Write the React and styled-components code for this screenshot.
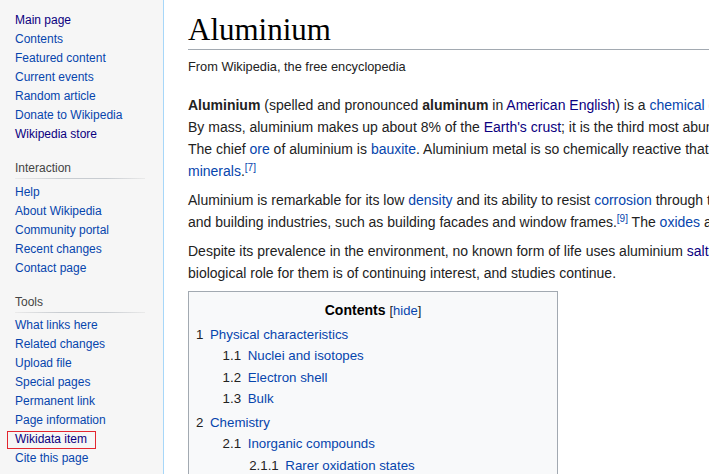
import React from "react";
import styled, { createGlobalStyle } from "styled-components";

const GlobalStyle = createGlobalStyle`
  html, body {
    margin: 0;
    padding: 0;
    background: #f6f6f6;
  }
  body {
    font-family: "Liberation Sans", Arial, sans-serif;
    color: #222;
  }
`;

const Page = styled.div`
  display: flex;
  width: 100vw;
  height: 100vh;
  overflow: hidden;
  background: #f6f6f6;
`;

const Sidebar = styled.nav`
  flex: 0 0 163px;
  padding-top: 11px;
  font-size: 12px;
`;

const Portal = styled.div`
  margin-bottom: 15px;
`;

const PortalHeading = styled.h3`
  margin: 0 0 0 15px;
  width: 130px;
  font-size: 12px;
  font-weight: normal;
  line-height: 19px;
  color: #444;
  padding-bottom: 1px;
  &::after {
    content: "";
    display: block;
    height: 1px;
    background: linear-gradient(to right, #eaeaea 0%, #c8ccd1 35%, #c8ccd1 70%, #eaeaea 100%);
  }
`;

const LinkList = styled.ul`
  list-style: none;
  margin: ${(p) => (p.$first ? "0" : "2.5px")} 0 0 0;
  padding: 0 0 0 15px;
`;

const LinkItem = styled.li`
  position: relative;
  line-height: 19px;
  white-space: nowrap;
`;

const Link = styled.a`
  color: ${(p) => (p.$visited ? "#0b0080" : "#0645ad")};
  text-decoration: none;
`;

const Highlight = styled.span`
  position: absolute;
  left: -8px;
  top: 1px;
  width: 89px;
  height: 18px;
  box-sizing: border-box;
  border: 1px solid #e3262f;
  pointer-events: none;
`;

const Content = styled.main`
  flex: 1;
  min-width: 0;
  background: #fff;
  border-left: 1px solid #a7d7f9;
  padding: 10px 0 0 24px;
  overflow: hidden;
`;

const Title = styled.h1`
  margin: 0;
  font-family: "Liberation Serif", "Times New Roman", serif;
  font-weight: normal;
  font-size: 31px;
  line-height: 39px;
  color: #000;
  border-bottom: 1px solid #a2a9b1;
`;

const Tagline = styled.div`
  margin-top: 8px;
  font-size: 12.8px;
  line-height: 18px;
  color: #222;
`;

const Paragraph = styled.p`
  margin: ${(p) => p.$top || 7}px 0 0 0;
  font-size: 14px;
  line-height: 22px;
  white-space: nowrap;
  color: #222;

  sup {
    font-size: 10px;
    line-height: 1;
    vertical-align: 5px;
  }
`;

const TocBox = styled.div`
  margin-top: 7px;
  width: 370px;
  box-sizing: border-box;
  padding: 7px;
  background: #f8f9fa;
  border: 1px solid #a2a9b1;
  font-size: 13.3px;
`;

const TocTitle = styled.div`
  text-align: center;
  line-height: 22px;
  white-space: nowrap;

  strong {
    font-size: 14px;
    font-weight: bold;
    color: #000;
  }
`;

const HideToggle = styled.span`
  font-size: 13px;
  padding-left: 4px;
  color: #222;
`;

const TocList = styled.ul`
  list-style: none;
  margin: ${(p) => (p.$nested ? "0 0 0 26.6px" : "2px 0 0 0")};
  padding: 0;
`;

const TocEntry = styled.li`
  line-height: 21.3px;
  white-space: nowrap;
  margin-bottom: ${(p) => (p.$top ? "3px" : "0")};
`;

const TocNumber = styled.span`
  color: #222;
  padding-right: 6.6px;
`;

const navigation = [
  { label: "Main page", visited: true },
  { label: "Contents" },
  { label: "Featured content" },
  { label: "Current events" },
  { label: "Random article" },
  { label: "Donate to Wikipedia" },
  { label: "Wikipedia store", visited: true },
];

const portals = [
  {
    heading: "Interaction",
    links: [
      { label: "Help" },
      { label: "About Wikipedia" },
      { label: "Community portal" },
      { label: "Recent changes" },
      { label: "Contact page" },
    ],
  },
  {
    heading: "Tools",
    links: [
      { label: "What links here" },
      { label: "Related changes" },
      { label: "Upload file" },
      { label: "Special pages" },
      { label: "Permanent link" },
      { label: "Page information" },
      { label: "Wikidata item", visited: true, marked: true },
      { label: "Cite this page" },
    ],
  },
];

const toc = [
  {
    num: "1",
    label: "Physical characteristics",
    children: [
      { num: "1.1", label: "Nuclei and isotopes" },
      { num: "1.2", label: "Electron shell" },
      { num: "1.3", label: "Bulk" },
    ],
  },
  {
    num: "2",
    label: "Chemistry",
    children: [
      {
        num: "2.1",
        label: "Inorganic compounds",
        children: [{ num: "2.1.1", label: "Rarer oxidation states" }],
      },
    ],
  },
];

const Links = ({ links, first }) => (
  <LinkList $first={first}>
    {links.map((l) => (
      <LinkItem key={l.label}>
        {l.marked && <Highlight />}
        <Link href="#" $visited={l.visited}>
          {l.label}
        </Link>
      </LinkItem>
    ))}
  </LinkList>
);

const TocItems = ({ items, nested }) => (
  <TocList $nested={nested}>
    {items.map((item) => (
      <TocEntry key={item.num} $top={!nested}>
        <TocNumber>{item.num}</TocNumber>
        <Link href="#">{item.label}</Link>
        {item.children && <TocItems items={item.children} nested />}
      </TocEntry>
    ))}
  </TocList>
);

export default function App() {
  return (
    <>
      <GlobalStyle />
      <Page>
        <Sidebar>
          <Portal>
            <Links links={navigation} first />
          </Portal>
          {portals.map((p) => (
            <Portal key={p.heading}>
              <PortalHeading>{p.heading}</PortalHeading>
              <Links links={p.links} />
            </Portal>
          ))}
        </Sidebar>
        <Content>
          <Title>Aluminium</Title>
          <Tagline>From Wikipedia, the free encyclopedia</Tagline>
          <Paragraph $top={18}>
            <b>Aluminium</b> (spelled and pronounced <b>aluminum</b> in{" "}
            <Link href="#" $visited>American English</Link>) is a{" "}
            <Link href="#">chemical element</Link> in the{" "}
            <Link href="#">boron group</Link> with symbol Al and atomic number 13.
            <br />
            By mass, aluminium makes up about 8% of the{" "}
            <Link href="#" $visited>Earth's crust</Link>; it is the third most
            abundant element after oxygen and silicon.
            <br />
            The chief <Link href="#">ore</Link> of aluminium is{" "}
            <Link href="#">bauxite</Link>. Aluminium metal is so chemically
            reactive that native specimens are rare and limited to extreme
            environments.
            <br />
            <Link href="#">minerals</Link>.<sup><Link href="#">[7]</Link></sup>
          </Paragraph>
          <Paragraph>
            Aluminium is remarkable for its low <Link href="#">density</Link> and
            its ability to resist <Link href="#">corrosion</Link> through the
            phenomenon of passivation.
            <br />
            and building industries, such as building facades and window
            frames.<sup><Link href="#">[9]</Link></sup> The{" "}
            <Link href="#">oxides</Link> and <Link href="#">sulfates</Link> are
            the most useful compounds of aluminium.
          </Paragraph>
          <Paragraph>
            Despite its prevalence in the environment, no known form of life uses
            aluminium <Link href="#" $visited>salts</Link> metabolically.
            <br />
            biological role for them is of continuing interest, and studies
            continue.
          </Paragraph>
          <TocBox>
            <TocTitle>
              <strong>Contents</strong>
              <HideToggle>
                [<Link href="#">hide</Link>]
              </HideToggle>
            </TocTitle>
            <TocItems items={toc} />
          </TocBox>
        </Content>
      </Page>
    </>
  );
}
